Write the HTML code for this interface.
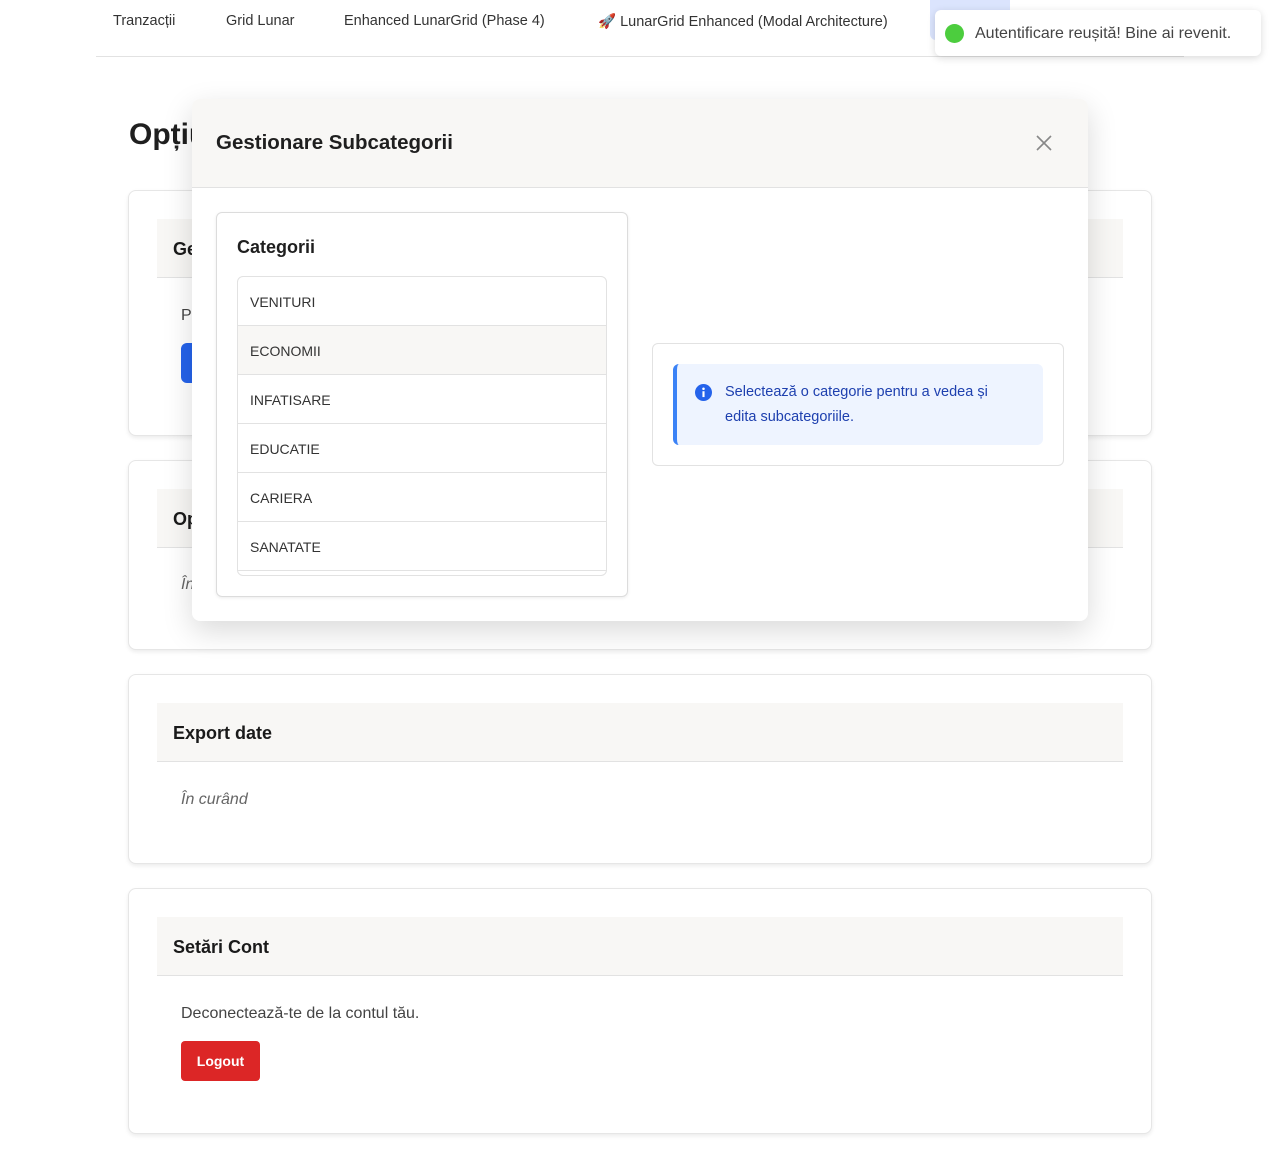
<!DOCTYPE html>
<html><head><meta charset="utf-8"><style>
*{box-sizing:border-box;margin:0;padding:0}
body{width:1280px;height:1158px;background:#fff;font-family:"Liberation Sans","DejaVu Sans",sans-serif;color:#1f1f1f;position:relative;overflow:hidden}
.abs{position:absolute}
.nav{font-size:14.5px;color:#333;top:13px}
.card{position:absolute;left:128px;width:1024px;border:1px solid #e6e6e6;border-radius:8px;background:#fff;box-shadow:0 2px 4px rgba(0,0,0,.08)}
.ch{position:absolute;left:28px;width:966px;height:59px;background:#f8f7f5;border-bottom:1px solid #e2e2e2;font-size:18px;font-weight:bold;padding:20px 0 0 16px;color:#1a1a1a}
.it{font-style:italic;color:#666;font-size:16px;position:absolute;left:52px}
.row{height:49px;border-bottom:1px solid #e2e2e2;font-size:14px;color:#333;padding:17px 0 0 12px}
</style></head><body>
<div class="abs nav" style="left:113px">Tranzacții</div>
<div class="abs nav" style="left:226px">Grid Lunar</div>
<div class="abs nav" style="left:344px">Enhanced LunarGrid (Phase 4)</div>
<div class="abs nav" style="left:598px">🚀 LunarGrid Enhanced (Modal Architecture)</div>
<div class="abs" style="left:930px;top:0;width:80px;height:40px;background:#dbe4fd;border-radius:0 0 6px 6px"></div>
<div class="abs" style="left:96px;top:56px;width:1088px;height:1px;background:#e2e2e2"></div>

<div class="abs" style="left:129px;top:118px;font-size:30px;font-weight:bold">Opțiuni</div>

<div class="card" style="top:190px;height:246px">
 <div class="ch" style="top:28px">Gestionare categorii</div>
 <div class="abs" style="left:52px;top:116px;font-size:16px;color:#444">P</div>
 <div class="abs" style="left:52px;top:152px;width:120px;height:40px;background:#2563eb;border-radius:6px"></div>
</div>
<div class="card" style="top:460px;height:190px">
 <div class="ch" style="top:28px">Opțiuni</div>
 <div class="it" style="top:115px">În curând</div>
</div>
<div class="card" style="top:674px;height:190px">
 <div class="ch" style="top:28px">Export date</div>
 <div class="it" style="top:116px">În curând</div>
</div>
<div class="card" style="top:888px;height:246px">
 <div class="ch" style="top:28px">Setări Cont</div>
 <div class="abs" style="left:52px;top:116px;font-size:16px;color:#444">Deconectează-te de la contul tău.</div>
 <div class="abs" style="left:52px;top:152px;width:79px;height:40px;background:#dc2626;border-radius:4px;color:#fff;font-weight:bold;font-size:14px;text-align:center;line-height:40px">Logout</div>
</div>

<!-- modal -->
<div class="abs" style="left:192px;top:99px;width:896px;height:522px;background:#fff;border-radius:8px;box-shadow:0 10px 30px rgba(0,0,0,.15)">
 <div class="abs" style="left:0;top:0;width:896px;height:89px;background:#f8f7f5;border-bottom:1px solid #e2e2e2;border-radius:8px 8px 0 0"></div>
 <div class="abs" style="left:24px;top:32px;font-size:20.5px;font-weight:bold">Gestionare Subcategorii</div>
 <svg class="abs" style="left:844px;top:36px" width="16" height="16" viewBox="0 0 16 16"><path d="M1 1L15 15M15 1L1 15" stroke="#888" stroke-width="1.6"/></svg>
 <div class="abs" style="left:24px;top:113px;width:412px;height:385px;border:1px solid #dcdcdc;border-radius:6px;box-shadow:0 1px 3px rgba(0,0,0,.08)">
  <div class="abs" style="left:20px;top:24px;font-size:18px;font-weight:bold">Categorii</div>
  <div class="abs" style="left:20px;top:63px;width:370px;height:300px;border:1px solid #e2e2e2;border-radius:6px;overflow:hidden">
   <div class="row">VENITURI</div>
   <div class="row" style="background:#f8f7f5">ECONOMII</div>
   <div class="row">INFATISARE</div>
   <div class="row">EDUCATIE</div>
   <div class="row">CARIERA</div>
   <div class="row">SANATATE</div>
  </div>
 </div>
 <div class="abs" style="left:460px;top:244px;width:412px;height:123px;border:1px solid #e2e2e2;border-radius:6px">
  <div class="abs" style="left:20px;top:20px;width:370px;height:81px;background:#eef4ff;border-left:4px solid #3b82f6;border-radius:6px"></div>
  <svg class="abs" style="left:42px;top:40px" width="17" height="17" viewBox="0 0 16 16"><circle cx="8" cy="8" r="8" fill="#2563eb"/><circle cx="8" cy="4.5" r="1.2" fill="#fff"/><rect x="7" y="6.8" width="2" height="5.5" fill="#fff"/></svg>
  <div class="abs" style="left:72px;top:36px;font-size:14.5px;line-height:25px;color:#1e40af;width:285px">Selectează o categorie pentru a vedea și edita subcategoriile.</div>
 </div>
</div>

<!-- toast -->
<div class="abs" style="left:935px;top:10px;width:326px;height:46px;background:#fff;border-radius:6px;box-shadow:0 2px 8px rgba(0,0,0,.15)">
 <div class="abs" style="left:10px;top:14px;width:19px;height:19px;border-radius:50%;background:#4ccd3e"></div>
 <div class="abs" style="left:40px;top:15px;font-size:16px;color:#444">Autentificare reușită! Bine ai revenit.</div>
</div>
</body></html>
